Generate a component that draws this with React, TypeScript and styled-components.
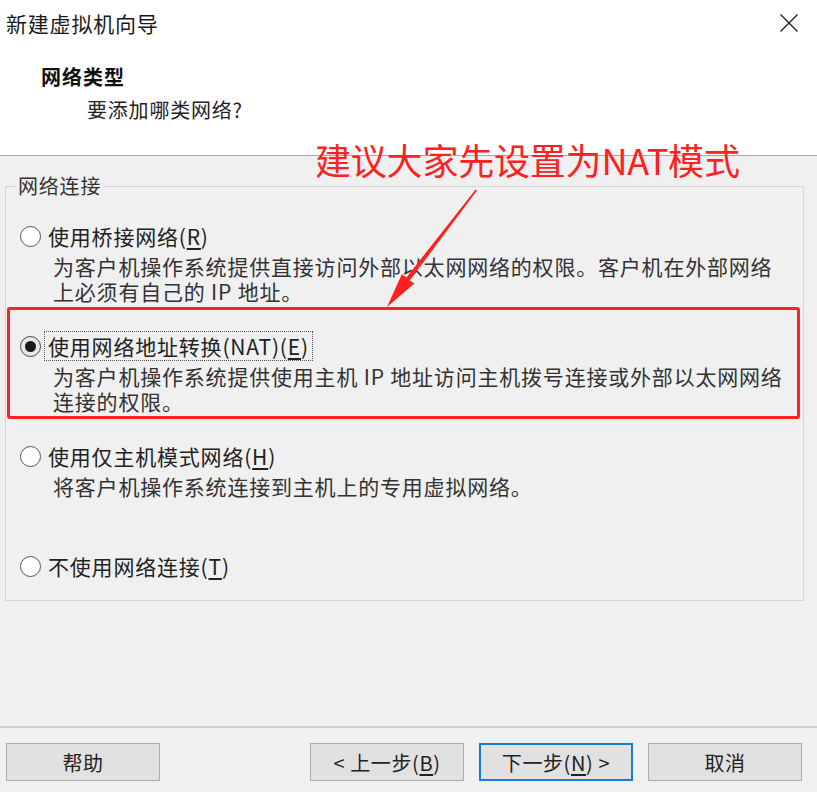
import React from "react";
import styled, { createGlobalStyle } from "styled-components";

const Global = createGlobalStyle`
  html, body { margin: 0; padding: 0; background: #f0f0f0; }
  body { font-family: "Noto Sans CJK SC", "Noto Sans", sans-serif; }
`;

const Window = styled.div`
  position: relative;
  width: 817px;
  height: 792px;
  overflow: hidden;
  background: #f0f0f0;
  display: flex;
  flex-direction: column;
  color: #262626;
  font-family: "Noto Sans CJK SC", "Noto Sans", sans-serif;
`;

const Header = styled.header`
  background: #ffffff;
  height: 155px;
  border-bottom: 1px solid #a8a8a8;
  display: flex;
  flex-direction: column;
  flex-shrink: 0;
`;

const TitleBar = styled.div`
  height: 45px;
  display: flex;
  align-items: center;
  justify-content: space-between;
  padding: 0 18px 0 6px;
`;

const Title = styled.div`
  font-size: 21px;
  letter-spacing: 0.8px;
  color: #1a1a1a;
`;

const CloseButton = styled.button`
  border: none;
  background: transparent;
  padding: 0;
  width: 20px;
  height: 20px;
  display: flex;
  align-items: center;
  justify-content: center;
`;

const HeaderText = styled.div`
  padding: 17px 0 0 41px;
  display: flex;
  flex-direction: column;
`;

const Heading = styled.div`
  font-size: 20px;
  font-weight: 700;
  line-height: 30px;
  letter-spacing: 1px;
  color: #111;
`;

const SubHeading = styled.div`
  font-size: 20px;
  line-height: 30px;
  padding-left: 46px;
  margin-top: 3px;
  letter-spacing: 0.8px;
  color: #222;
`;

const Main = styled.main`
  flex: 1;
  padding: 0 13px 0 5px;
`;

const Group = styled.fieldset`
  margin: 18px 0 0 0;
  border: 1px solid #d6d6d6;
  border-radius: 0;
  padding: 23px 0 19px 14px;
  min-width: 0;
`;

const Legend = styled.legend`
  font-size: 20px;
  line-height: 24px;
  padding: 0 2px;
  margin-left: -4px;
  letter-spacing: 0.8px;
  color: #333;
`;

const OptionBlock = styled.div`
  height: 110px;
  display: flex;
  flex-direction: column;
  &:last-child {
    height: auto;
  }
`;

const OptionRow = styled.label`
  display: flex;
  align-items: center;
  height: 30px;
`;

const Radio = styled.span<{ $checked?: boolean }>`
  box-sizing: border-box;
  width: 21px;
  height: 21px;
  border-radius: 50%;
  border: 1.5px solid ${(p) => (p.$checked ? "#444" : "#555")};
  background: ${(p) => (p.$checked ? "#e8e8e8" : "#fff")};
  display: flex;
  align-items: center;
  justify-content: center;
  flex-shrink: 0;
  &::after {
    content: "";
    width: 11px;
    height: 11px;
    border-radius: 50%;
    background: ${(p) => (p.$checked ? "#1a1a1a" : "transparent")};
  }
`;

const OptionLabel = styled.span<{ $focused?: boolean }>`
  margin-left: 3px;
  padding: 0 3px;
  border: 1px ${(p) => (p.$focused ? "dotted #555" : "solid transparent")};
  font-size: 21px;
  line-height: 28px;
  letter-spacing: 0.8px;
  color: #222;
  white-space: nowrap;
`;

const Key = styled.span`
  text-decoration: underline;
  text-underline-offset: 3px;
`;

const Desc = styled.div`
  padding-left: 33px;
  margin-top: 3px;
  font-size: 21px;
  line-height: 25px;
  letter-spacing: 0.8px;
  color: #333;
  white-space: nowrap;
`;

const Footer = styled.footer`
  flex-shrink: 0;
  border-top: 2px solid #cccccc;
  padding: 15px 15px 11px 6px;
  display: flex;
  justify-content: space-between;
`;

const ButtonGroup = styled.div`
  display: flex;
  gap: 15px;
`;

const Button = styled.button<{ $default?: boolean }>`
  box-sizing: border-box;
  width: 154px;
  height: 38px;
  background: #e1e1e1;
  border: ${(p) => (p.$default ? "2px solid #1a7ad6" : "1px solid #adadad")};
  font-family: "Noto Sans CJK SC", "Noto Sans", sans-serif;
  font-size: 20px;
  letter-spacing: 0.6px;
  color: #222;
  padding: 0;
  display: flex;
  align-items: center;
  justify-content: center;
`;

const AnnotationText = styled.div`
  position: absolute;
  left: 315px;
  top: 135px;
  font-size: 36px;
  line-height: 48px;
  color: #ff2020;
  white-space: nowrap;
  letter-spacing: -0.2px;
`;

const AnnotationBox = styled.div`
  position: absolute;
  left: 7px;
  top: 307px;
  width: 793px;
  height: 112px;
  box-sizing: border-box;
  border: 3px solid #ff2222;
  border-radius: 3px;
  pointer-events: none;
`;

const ArrowLayer = styled.svg`
  position: absolute;
  left: 0;
  top: 0;
  pointer-events: none;
`;

type Opt = {
  label: React.ReactNode;
  lines: string[];
  checked?: boolean;
};

const options: Opt[] = [
  {
    label: (
      <>
        使用桥接网络(<Key>R</Key>)
      </>
    ),
    lines: [
      "为客户机操作系统提供直接访问外部以太网网络的权限。客户机在外部网络",
      "上必须有自己的 IP 地址。",
    ],
  },
  {
    label: (
      <>
        使用网络地址转换(NAT)(<Key>E</Key>)
      </>
    ),
    lines: [
      "为客户机操作系统提供使用主机 IP 地址访问主机拨号连接或外部以太网网络",
      "连接的权限。",
    ],
    checked: true,
  },
  {
    label: (
      <>
        使用仅主机模式网络(<Key>H</Key>)
      </>
    ),
    lines: ["将客户机操作系统连接到主机上的专用虚拟网络。"],
  },
  {
    label: (
      <>
        不使用网络连接(<Key>T</Key>)
      </>
    ),
    lines: [],
  },
];

export default function App() {
  return (
    <>
      <Global />
      <Window>
        <Header>
          <TitleBar>
            <Title>新建虚拟机向导</Title>
            <CloseButton aria-label="关闭">
              <svg width="20" height="20" viewBox="0 0 20 20">
                <path d="M1.5 1.5 L18.5 18.5 M18.5 1.5 L1.5 18.5" stroke="#222" strokeWidth="1.4" fill="none" />
              </svg>
            </CloseButton>
          </TitleBar>
          <HeaderText>
            <Heading>网络类型</Heading>
            <SubHeading>要添加哪类网络?</SubHeading>
          </HeaderText>
        </Header>
        <Main>
          <Group>
            <Legend>网络连接</Legend>
            {options.map((o, i) => (
              <OptionBlock key={i}>
                <OptionRow>
                  <Radio $checked={o.checked} />
                  <OptionLabel $focused={o.checked}>{o.label}</OptionLabel>
                </OptionRow>
                {o.lines.length > 0 && (
                  <Desc>
                    {o.lines.map((l, j) => (
                      <div key={j}>{l}</div>
                    ))}
                  </Desc>
                )}
              </OptionBlock>
            ))}
          </Group>
        </Main>
        <Footer>
          <Button>帮助</Button>
          <ButtonGroup>
            <Button>
              &lt; 上一步(<Key>B</Key>)
            </Button>
            <Button $default>
              下一步(<Key>N</Key>) &gt;
            </Button>
            <Button>取消</Button>
          </ButtonGroup>
        </Footer>

        <AnnotationBox />
        <AnnotationText>建议大家先设置为NAT模式</AnnotationText>
        <ArrowLayer width="817" height="792" viewBox="0 0 817 792">
          <polygon
            points="477,190.6 475.6,189.4 406.4,277.4 401.8,274.2 387,307 414.4,283.6 409.6,280.6"
            fill="#ff2020"
          />
        </ArrowLayer>
      </Window>
    </>
  );
}
